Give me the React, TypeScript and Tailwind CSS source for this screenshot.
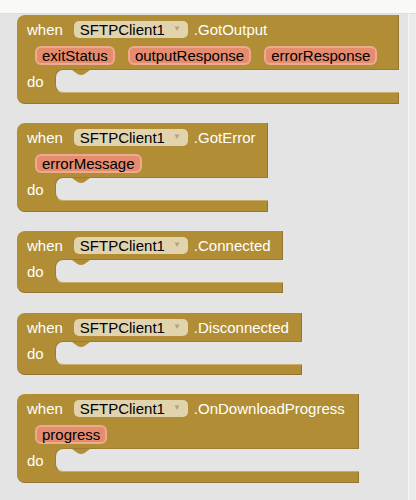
import React from "react";

type EventDef = {
  name: string;
  params: string[];
  width: string;
  top: string;
};

const events: EventDef[] = [
  { name: ".GotOutput", params: ["exitStatus", "outputResponse", "errorResponse"], width: "w-[382px]", top: "mt-[1px]" },
  { name: ".GotError", params: ["errorMessage"], width: "w-[251px]", top: "mt-[19px]" },
  { name: ".Connected", params: [], width: "w-[266px]", top: "mt-[19px]" },
  { name: ".Disconnected", params: [], width: "w-[285px]", top: "mt-[20px]" },
  { name: ".OnDownloadProgress", params: ["progress"], width: "w-[342px]", top: "mt-[19px]" },
];

const Notch = () => (
  <svg className="absolute left-[16px] top-0" width="18" height="6" viewBox="0 0 18 6">
    <path d="M0 0 L5.5 4 Q7 5 9 5 Q11 5 12.5 4 L18 0 Z" fill="#b18e35" />
  </svg>
);

const EventBlock = ({ ev }: { ev: EventDef }) => {
  const hasParams = ev.params.length > 0;
  return (
    <div className={`${ev.width} ${ev.top} flex flex-col text-[15px] leading-none`}>
      <div className="bg-[#b18e35] rounded-tl-[8px] border-r border-[#927530]">
        <div className="h-[28px] flex items-center pl-[10px]">
          <span className="text-white">when</span>
          <div className="ml-[11px] h-[17px] w-[114px] rounded-[5px] bg-[#e1d3ad] flex items-center pl-[6px] text-black">
            <span>SFTPClient1</span>
            <span className="ml-[8px] text-[8px] text-[#b4a47c]">▼</span>
          </div>
          <span className="ml-[6px] text-white">{ev.name}</span>
        </div>
        {hasParams && (
          <div className="h-[26px] flex items-start pt-[3px] pl-[18px] gap-[13px]">
            {ev.params.map((p) => (
              <div
                key={p}
                className="h-[19px] px-[5px] rounded-[6px] bg-[#e58c6e] border-2 border-[#eeaa8f] flex items-center text-black"
              >
                {p}
              </div>
            ))}
          </div>
        )}
      </div>
      <div className={`flex bg-[#b18e35] ${hasParams ? "h-[24px]" : "h-[24px]"}`}>
        <div className="w-[38px] flex items-center pl-[10px] text-white">do</div>
        <div className="relative flex-1 bg-[#e4e4e4] rounded-l-[8px] border-l border-t border-b border-l-[#9a7d34] border-t-[#9a7d34] border-b-[#c8ad68]">
          <Notch />
        </div>
      </div>
      <div
        className={`bg-[#b18e35] rounded-bl-[8px] border-r border-b border-[#927530] ${
          hasParams ? "h-[11px]" : "h-[10px]"
        }`}
      />
    </div>
  );
};

export default function App() {
  return (
    <div className="w-[416px] h-[500px] overflow-hidden bg-[#e4e4e4] font-['Liberation_Sans',Arial,sans-serif] flex flex-col">
      <div className="h-[14px] bg-[#f9f9f5] border-b border-[#dedede]" />
      <div className="flex-1 flex">
        <div className="w-[408px] pl-[17px] flex flex-col">
          {events.map((ev) => (
            <EventBlock key={ev.name} ev={ev} />
          ))}
        </div>
        <div className="flex-1 bg-[#ebebeb] border-l border-[#f7f7f7]" />
      </div>
    </div>
  );
}
